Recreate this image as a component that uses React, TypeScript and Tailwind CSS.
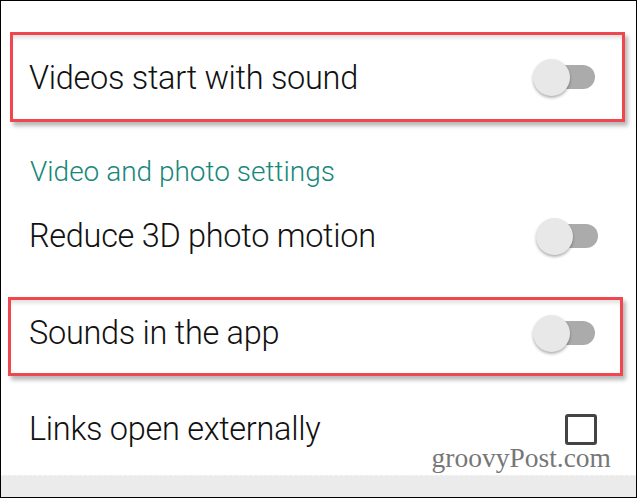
import React from "react";

function Toggle() {
  return (
    <div className="relative w-[66px] h-[38px] flex items-center">
      <div className="absolute left-[8px] right-[4px] h-[24px] rounded-full bg-[#ababab]" />
      <div className="absolute left-[0px] w-[37px] h-[37px] rounded-full bg-[#e8e8e8] shadow-[0_2px_3px_rgba(0,0,0,0.3)]" />
    </div>
  );
}

function Checkbox() {
  return <div className="w-[32px] h-[31px] border-[3px] border-[#444] rounded-[3px]" />;
}

const font = { fontFamily: "Roboto, 'Liberation Sans', sans-serif" } as const;

const label = "text-[32.5px] font-light text-[#111] tracking-[-0.3px] leading-none";

export default function App() {
  return (
    <div
      className="w-[637px] h-[498px] bg-white border border-black flex flex-col overflow-hidden relative"
      style={font}
    >
      <div className="h-[31px]" />
      <div className="ml-[9px] w-[615px] h-[90px] border-[3px] border-[#f0474e] shadow-[3px_4px_4px_rgba(0,0,0,0.28),inset_0_5px_4px_-2px_rgba(0,0,0,0.12)] flex items-center justify-between pl-[16px] pr-[23px]">
        <span className={label + " pt-[2px]"}>Videos start with sound</span>
        <Toggle />
      </div>
      <div className="h-[36px]" />
      <div className="pl-[29px] text-[28px] font-light text-[#17877a] leading-none h-[28px] flex items-center">
        Video and photo settings
      </div>
      <div className="h-[30px]" />
      <div className="flex items-center justify-between pl-[28px] pr-[34px] h-[40px]">
        <span className={label}>Reduce 3D photo motion</span>
        <Toggle />
      </div>
      <div className="h-[41px]" />
      <div className="ml-[7px] w-[615px] h-[79px] border-[3px] border-[#f0474e] shadow-[3px_4px_4px_rgba(0,0,0,0.28),inset_0_5px_4px_-2px_rgba(0,0,0,0.12)] flex items-start justify-between pl-[18px] pr-[21px] pt-[14px]">
        <span className={label + " pt-[3px]"}>Sounds in the app</span>
        <Toggle />
      </div>
      <div className="h-[33px]" />
      <div className="flex items-center justify-between pl-[28px] pr-[39px] h-[40px]">
        <span className={label}>Links open externally</span>
        <Checkbox />
      </div>
      <div className="flex-1" />
      <div className="h-[22px] bg-[#ebebeb] border-t border-dashed border-[#f4f4f4]" />
      <div
        className="absolute right-[25px] bottom-[26px] text-[27.5px] text-[#777] leading-none"
        style={{ fontFamily: "'Liberation Serif', serif" }}
      >
        groovyPost.com
      </div>
    </div>
  );
}
